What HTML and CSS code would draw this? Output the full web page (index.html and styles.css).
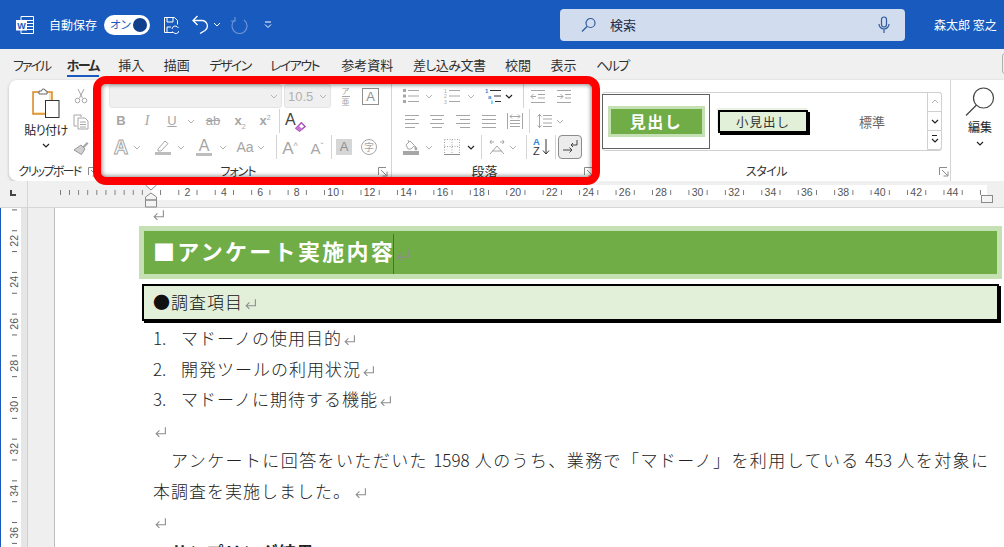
FILE: index.html
```html
<!DOCTYPE html>
<html lang="ja">
<head>
<meta charset="utf-8">
<title>Word</title>
<link rel="stylesheet" href="styles.css">
</head>
<body>
<svg class="defs" aria-hidden="true">
  <symbol id="bullets" viewBox="0 0 16 16"><g fill="#a6a6a6"><rect x="0" y="1" width="3" height="3"/><rect x="0" y="6.5" width="3" height="3"/><rect x="0" y="12" width="3" height="3"/></g><path d="M5 2.5h11M5 8h11M5 13.5h11" stroke="#a6a6a6" fill="none"/></symbol>
  <symbol id="outdent" viewBox="0 0 16 16"><path d="M1 2.5h14M8 6.5h7M8 10h7M1 14.5h14M6 8.5H1M3.5 6L1 8.500l2.500 2.500" stroke="#a6a6a6" fill="none"/></symbol>
  <symbol id="indent" viewBox="0 0 16 16"><path d="M1 2.5h14M9 6.500h6M9 10h6M1 14.500h14M1 8.500h6M4.500 6L7 8.500 4.500 11" stroke="#a6a6a6" fill="none"/></symbol>
  <symbol id="al" viewBox="0 0 16 16"><path d="M1 2.500h14M1 6.500h10M1 10.500h14M1 14.500h10" stroke="#a6a6a6" fill="none"/></symbol>
  <symbol id="ac" viewBox="0 0 16 16"><path d="M1 2.500h14M3 6.500h10M1 10.500h14M3 14.500h10" stroke="#a6a6a6" fill="none"/></symbol>
  <symbol id="ar" viewBox="0 0 16 16"><path d="M1 2.500h14M5 6.500h10M1 10.500h14M5 14.500h10" stroke="#a6a6a6" fill="none"/></symbol>
  <symbol id="aj" viewBox="0 0 16 16"><path d="M1 2.500h14M1 6.500h14M1 10.500h14M1 14.500h14" stroke="#a6a6a6" fill="none"/></symbol>
  <symbol id="dist" viewBox="0 0 16 16"><path d="M.5 0v16M15.500 0v16M3 3.500h10M5 1.500L3 3.500l2 2M11 1.500l2 2-2 2M3 7.500h10M3 10.500h10M3 13.500h10" stroke="#a6a6a6" fill="none"/></symbol>
  <symbol id="spacing" viewBox="0 0 16 16"><path d="M3.500 1v14M1.500 3.500l2-2 2 2M1.500 12.500l2 2 2-2M7 2.500h9M7 6h9M7 10h9M7 13.500h9" stroke="#a6a6a6" fill="none"/></symbol>
  <symbol id="shade" viewBox="0 0 16 16"><path d="M3 6l4-4 4.500 4.500-3.500 3.500H5z" fill="#fff" stroke="#a6a6a6"/><path d="M6 3l-1-2M12 7c1 1.500 2 2 2 3a1 1 0 0 1-2 0z" stroke="#a6a6a6" fill="#a6a6a6"/><rect x="0" y="12" width="16" height="4" fill="#a6a6a6"/></symbol>
  <symbol id="borders" viewBox="0 0 16 16"><path d="M.5.500h15v14M.5.500v14M8 .500v14M.5 7.500h15" stroke="#a6a6a6" stroke-dasharray="1 1.500" fill="none"/><path d="M0 15.500h16" stroke="#909090"/></symbol>
  <symbol id="aspace" viewBox="0 0 16 16"><path d="M1 15L8 7l7 8M3 12h10" stroke="#a6a6a6" fill="none"/><path d="M1 3h4M2.500 1L1 3l1.500 2M11 3h4M13.500 1L15 3l-1.500 2" stroke="#a6a6a6" fill="none"/></symbol>
  <symbol id="parabtn" viewBox="0 0 16 16"><path d="M15 1v5H9M11 4L9 6l2 2" stroke="#444" fill="none"/><path d="M1 11h9M7.500 8.500L10 11l-2.500 2.500" stroke="#444" fill="none"/></symbol>
  <symbol id="launch" viewBox="0 0 10 10"><path d="M.5 8V.500H8M3 3l5.500 5.500M9 4.500V9H4.500" stroke="#8a8a8a" fill="none"/></symbol>
  <symbol id="ch" viewBox="0 0 12 12"><path d="M3 5l3 3 3-3" stroke="#b5b5b5" fill="none"/></symbol>
  <symbol id="chd" viewBox="0 0 12 12"><path d="M3 5l3 3 3-3" stroke="#222" fill="none" stroke-width="1.200"/></symbol>
  <symbol id="ret" viewBox="0 0 12 12"><path d="M10.500 2v6H2M5 5L2 8l3 3" stroke="#8c8c8c" fill="none"/></symbol>
</svg>

<header class="titlebar">
  <svg class="wordicon" viewBox="0 0 18 18"><path d="M5 .5h12.500v17H5z" fill="none" stroke="#fff"/><path d="M11 4.500h6.500M11 7.500h6.500M11 10.500h6.500M11 13.500h6.500" stroke="#fff"/><rect x="0" y="4" width="11" height="10.500" fill="#fff"/><text x="1.200" y="12.500" class="wordw">W</text></svg>
  <span class="autosave">自動保存</span>
  <span class="toggle"><span class="toggle-text">オン</span><span class="knob"></span></span>
  <svg class="tb-save" viewBox="0 0 16 18"><path d="M10 16.500H1.500V1.500h10l3 3v4" fill="none" stroke="#fff"/><path d="M4 2v4h6V2M4 16v-5h4" fill="none" stroke="#fff"/><path d="M9 13a3.200 3.200 0 0 1 5.500-2l1 1M16 15a3.200 3.200 0 0 1-5.500 1.500l-1-1" fill="none" stroke="#fff"/></svg>
  <svg class="tb-undo" viewBox="0 0 17 19"><path d="M5.500 1L1 5.500 5.500 10M1 5.500h9a5.500 5.500 0 0 1 3 10L8 18.500" fill="none" stroke="#fff" stroke-width="1.300"/></svg>
  <svg class="tb-ch" viewBox="0 0 8 8"><path d="M1 2l3 3 3-3" fill="none" stroke="#fff"/></svg>
  <svg class="tb-redo" viewBox="0 0 18 18"><path d="M4 4a7.500 7.500 0 1 0 9 0M4 1v4H0" fill="none" stroke="#6c94d6" stroke-width="1.200"/></svg>
  <svg class="tb-custom" viewBox="0 0 8 8"><path d="M1 1h6M1 3.500l3 3 3-3" fill="none" stroke="#fff"/></svg>
  <div class="search">
    <svg class="s-icon" viewBox="0 0 16 16"><circle cx="9.500" cy="6" r="4.500" fill="none" stroke="#2f5a9e" stroke-width="1.200"/><path d="M6 9.500L1 14.500" stroke="#2f5a9e" stroke-width="1.200"/></svg>
    <span class="s-text">検索</span>
    <svg class="s-mic" viewBox="0 0 12 18"><rect x="3.500" y="1" width="5" height="10" rx="2.500" fill="none" stroke="#2f5a9e" stroke-width="1.200"/><path d="M1 8a5 5 0 0 0 10 0M6 13v4" fill="none" stroke="#2f5a9e" stroke-width="1.200"/></svg>
  </div>
  <span class="user">森太郎 窓之</span>
</header>

<nav class="tabs">
  <span class="tab kana tab-file">ファイル</span>
  <span class="tab kana tab-on">ホーム</span>
  <span class="tab">挿入</span>
  <span class="tab">描画</span>
  <span class="tab kana">デザイン</span>
  <span class="tab kana tab-lay">レイアウト</span>
  <span class="tab">参考資料</span>
  <span class="tab tab-sashi">差し込み文書</span>
  <span class="tab">校閲</span>
  <span class="tab">表示</span>
  <span class="tab kana">ヘルプ</span>
  <span class="tab-box"></span>
</nav>

<section class="ribbon">
  <div class="grp g-clip">
    <div class="clip-body">
      <div class="paste">
        <svg class="paste-ic" viewBox="0 0 28 30"><path d="M1 4h19v22H1z" fill="#fbe3b4" stroke="#d98a22" stroke-width="1.500"/><path d="M2 5h15v19H2z" fill="#fff"/><path d="M7 5V3h2.500a2 2 0 0 1 4 0H15v3H7z" fill="#fff" stroke="#666"/><rect x="13.500" y="12.500" width="13.500" height="17" fill="#fff" stroke="#333"/></svg>
        <span class="paste-t">貼り付け</span>
        <svg class="ch"><use href="#chd"/></svg>
      </div>
      <div class="clip-tools">
        <svg class="i" viewBox="0 0 16 16"><path d="M5 1l4.500 9M11 1L6.500 10" stroke="#a6a6a6" fill="none"/><circle cx="4.500" cy="12.500" r="2.300" fill="none" stroke="#a6a6a6"/><circle cx="11.500" cy="12.500" r="2.300" fill="none" stroke="#a6a6a6"/></svg>
        <svg class="i" viewBox="0 0 16 16"><path d="M1 1h7v2M1 1v11h3" fill="none" stroke="#a6a6a6"/><path d="M5 4h7l3 3v8H5z" fill="#fff" stroke="#a6a6a6"/><path d="M7 8h6M7 10.500h6M7 13h6" stroke="#a6a6a6"/></svg>
        <svg class="i" viewBox="0 0 16 16"><path d="M9 7l5-5 1.500 1.500-5 5z" fill="#a6a6a6"/><path d="M8 5l4 4-3.500 5.500L1 10z" fill="#d0d0d0" stroke="#999"/></svg>
      </div>
    </div>
    <div class="glabel">クリップボード</div>
    <svg class="launch"><use href="#launch"/></svg>
  </div>

  <div class="grp g-font">
    <div class="row">
      <span class="combo c-name"><svg class="ch"><use href="#ch"/></svg></span>
      <span class="combo c-size m2"><span>10.5</span><svg class="ch"><use href="#ch"/></svg></span>
      <span class="phon m9"><span class="phon-a">ア</span><span class="phon-b">亜</span></span>
      <span class="boxA m11">A</span>
    </div>
    <div class="row">
      <span class="t w24 bold">B</span>
      <span class="t w24 m2 ital">I</span>
      <span class="t w24 m1 und">U</span>
      <svg class="ch m1"><use href="#ch"/></svg>
      <span class="t w28 m2 strike">ab</span>
      <span class="t w22 m2 bold">x<sub>2</sub></span>
      <span class="t w22 m3 bold">x<sup>2</sup></span>
      <span class="sep m3"></span>
      <span class="eraser m2"><span class="era-a">A</span><svg class="era-i" viewBox="0 0 12 12"><path d="M1 8l6-6 4 4-6 5z" fill="#fff" stroke="#a94fb8" stroke-width="1.500"/><path d="M1 8l3-3 4 4-3 2z" fill="#c774d4"/></svg></span>
    </div>
    <div class="row">
      <span class="t w20 m2 big outl">A</span>
      <svg class="ch"><use href="#ch"/></svg>
      <svg class="i m12" viewBox="0 0 16 16"><path d="M3 10L10 2l3 2.500-7 7.500H3z" fill="#fff" stroke="#a6a6a6"/><rect x="0" y="13" width="16" height="3" fill="#bdbdbd"/></svg>
      <svg class="ch m4"><use href="#ch"/></svg>
      <span class="colorA m9"><span class="t-a">A</span></span>
      <svg class="ch m5"><use href="#ch"/></svg>
      <span class="t w20 m6 aa">Aa</span>
      <svg class="ch"><use href="#ch"/></svg>
      <span class="sep m9"></span>
      <span class="t w18 m4 bigt">A<small>^</small></span>
      <span class="t w18 m9 midt">A<small>ˇ</small></span>
      <span class="sep m5"></span>
      <span class="shadeA m4">A</span>
      <span class="ji m9">字</span>
    </div>
    <div class="glabel">フォント</div>
    <svg class="launch"><use href="#launch"/></svg>
  </div>

  <div class="grp g-para">
    <div class="row">
      <svg class="i m3"><use href="#bullets"/></svg>
      <svg class="ch m4"><use href="#ch"/></svg>
      <svg class="i m9" viewBox="0 0 16 16"><g fill="#a6a6a6" font-size="5" font-family="Liberation Sans"><text x="0" y="5">1</text><text x="0" y="10">2</text><text x="0" y="15.5">3</text></g><path d="M5 2.5h11M5 8h11M5 13.500h11" stroke="#a6a6a6" fill="none"/></svg>
      <svg class="ch m5"><use href="#ch"/></svg>
      <svg class="i m8" viewBox="0 0 16 16"><g fill="#2b88d8" font-size="6" font-weight="700" font-family="Liberation Sans"><text x="0" y="5">1</text><text x="3" y="10.500">a</text><text x="6" y="15.800">i</text></g><path d="M5 2.500h11M9 8h7M10 13.500h6" stroke="#333" fill="none"/></svg>
      <svg class="ch m2"><use href="#chd"/></svg>
      <span class="sep m8"></span>
      <svg class="i m6"><use href="#outdent"/></svg>
      <svg class="i m10"><use href="#indent"/></svg>
    </div>
    <div class="row">
      <svg class="i m4"><use href="#al"/></svg>
      <svg class="i m9"><use href="#ac"/></svg>
      <svg class="i m10"><use href="#ar"/></svg>
      <svg class="i m10"><use href="#aj"/></svg>
      <svg class="i m10"><use href="#dist"/></svg>
      <span class="sep m6"></span>
      <svg class="i m6"><use href="#spacing"/></svg>
      <svg class="ch m2"><use href="#ch"/></svg>
    </div>
    <div class="row">
      <svg class="i m3"><use href="#shade"/></svg>
      <svg class="ch m4"><use href="#ch"/></svg>
      <svg class="i m9"><use href="#borders"/></svg>
      <svg class="ch m5"><use href="#chd"/></svg>
      <span class="sep m4"></span>
      <svg class="i m7"><use href="#aspace"/></svg>
      <svg class="ch m2"><use href="#ch"/></svg>
      <span class="sep m7"></span>
      <span class="sort m6"><span class="sort-a">A</span><span class="sort-z">Z</span><svg class="sort-arr" viewBox="0 0 8 16"><path d="M4 0v15M1 11.500L4 15l3-3.500" fill="none" stroke="#333"/></svg></span>
      <span class="sep m4"></span>
      <span class="parabtn m2"><svg class="i"><use href="#parabtn"/></svg></span>
    </div>
    <div class="glabel">段落</div>
    <svg class="launch"><use href="#launch"/></svg>
  </div>

  <div class="grp g-style">
    <div class="gallery">
      <div class="st st-h1"><span class="st-h1-in">見出し</span></div>
      <div class="st st-h2"><span class="st-h2-in">小見出し</span></div>
      <div class="st st-n">標準</div>
      <div class="st-scroll">
        <span class="st-b"><svg class="ch flip"><use href="#ch"/></svg></span>
        <span class="st-b"><svg class="ch"><use href="#chd"/></svg></span>
        <span class="st-b st-more"><svg class="ch"><use href="#chd"/></svg></span>
      </div>
    </div>
    <div class="glabel">スタイル</div>
    <svg class="launch launch-dark"><use href="#launch"/></svg>
  </div>

  <div class="grp g-edit">
    <svg class="edit-ic" viewBox="0 0 30 30"><circle cx="18.500" cy="11" r="10" fill="none" stroke="#444" stroke-width="1.200"/><path d="M11.500 18L1 28.500" stroke="#444" stroke-width="1.200"/></svg>
    <span class="edit-t">編集</span>
    <svg class="ch"><use href="#chd"/></svg>
  </div>
</section>

<div class="hruler">
  <div class="corner"><span class="tabmark"></span></div>
  <div class="r-left"></div>
  <div class="r-right">
    <span>2</span><span>4</span><span>6</span><span>8</span><span>10</span><span>12</span><span>14</span><span>16</span><span>18</span><span>20</span><span>22</span><span>24</span><span>26</span><span>28</span><span>30</span><span>32</span><span>34</span><span>36</span><span>38</span><span>40</span><span>42</span><span>44</span>
    <i class="home"></i>
  </div>
  <svg class="indent-mark" viewBox="0 0 12 27"><path d="M.5.500h11V4L6 9 .5 4z" fill="#fff" stroke="#8a8a8a"/><path d="M.5 19V16L6 12l5.500 4v3zM.5 19h11v7H.5z" fill="#f4f4f4" stroke="#8a8a8a"/></svg>
</div>

<main class="workspace">
  <aside class="vruler">
    <div class="v-track">
      <span>22</span><span>24</span><span>26</span><span>28</span><span>30</span><span>32</span><span>34</span><span>36</span>
    </div>
  </aside>
  <div class="gutter"></div>
  <article class="page">
    <div class="mark-line"><svg class="ret"><use href="#ret"/></svg></div>
    <h1 class="h1">■アンケート実施内容<span class="caret"></span><svg class="ret ret-h"><use href="#ret"/></svg></h1>
    <h2 class="h2">●調査項目<svg class="ret"><use href="#ret"/></svg></h2>
    <p class="ln"><span class="num">1.</span>マドーノの使用目的<svg class="ret"><use href="#ret"/></svg></p>
    <p class="ln"><span class="num">2.</span>開発ツールの利用状況<svg class="ret"><use href="#ret"/></svg></p>
    <p class="ln"><span class="num">3.</span>マドーノに期待する機能<svg class="ret"><use href="#ret"/></svg></p>
    <p class="ln"><svg class="ret"><use href="#ret"/></svg></p>
    <p class="ln ln-just">アンケートに回答をいただいた 1598 人のうち、業務で「マドーノ」を利用している 453 人を対象に</p>
    <p class="ln">本調査を実施しました。<svg class="ret ret-sp"><use href="#ret"/></svg></p>
    <p class="ln"><svg class="ret"><use href="#ret"/></svg></p>
    <p class="ln ln-b">サンプリング結果</p>
  </article>
</main>

<div class="redbox"></div>
</body>
</html>
```

FILE: styles.css
```css
* { box-sizing: border-box; }
html, body { margin: 0; padding: 0; }
body {
  width: 1004px; height: 547px; overflow: hidden; position: relative;
  background: #f0f0f0;
  font-family: "Noto Sans CJK JP", "Noto Sans", sans-serif;
  font-size: 12px; color: #262626;
}
.defs { position: absolute; width: 0; height: 0; }
svg { display: block; flex: none; }

/* title bar */
.titlebar { height: 49px; background: #185abd; color: #fff; display: flex; align-items: center; padding-left: 16px; }
.wordicon { width: 18px; height: 18px; }
.wordw { font: 700 9px "Liberation Sans", sans-serif; fill: #185abd; }
.autosave { margin-left: 15px; font-size: 12px; width: 48px; }
.toggle { margin-left: 7px; width: 46px; height: 20px; border-radius: 10px; background: #fff; display: flex; align-items: center; justify-content: space-between; padding: 0 3px 0 6px; }
.toggle-text { color: #185abd; font-size: 11.500px; line-height: 1; font-feature-settings: "palt"; }
.knob { width: 14px; height: 14px; border-radius: 50%; background: #12408c; }
.tb-save { width: 16px; height: 18px; margin-left: 13px; }
.tb-undo { width: 17px; height: 19px; margin-left: 13px; }
.tb-ch { width: 8px; height: 8px; margin-left: 4px; }
.tb-redo { width: 18px; height: 18px; margin-left: 10px; }
.tb-custom { width: 8px; height: 8px; margin-left: 15px; }
.search { margin-left: 288px; width: 345px; height: 32px; border-radius: 4px; background: #d1dcee; display: flex; align-items: center; padding-left: 21px; }
.s-icon { width: 16px; height: 16px; }
.s-text { margin-left: 13px; font-size: 13px; color: #1f2b45; }
.s-mic { width: 12px; height: 18px; margin-left: 242px; }
.user { margin-left: 29px; font-size: 12px; white-space: nowrap; }

/* tabs */
.tabs { height: 31px; display: flex; align-items: center; padding-left: 13px; gap: 19.500px; font-size: 13px; color: #303030; position: relative; font-feature-settings: "palt"; }
.tab { line-height: 18px; white-space: nowrap; }
.kana { letter-spacing: -1.600px; }
.tab-file { margin-right: -3px; letter-spacing: -2px; }
.tab-lay { margin-right: 3px; }
.tab-sashi { letter-spacing: -.5px; }
.tab-on { font-weight: 700; position: relative; }
.tab-on::after { content: ""; position: absolute; left: 0; right: 0; bottom: -3px; height: 2px; background: #185abd; }
.tab-box { position: absolute; left: 1002px; top: 4px; width: 10px; height: 21px; border: 1px solid #b0b0b0; border-radius: 3px; }

/* ribbon */
.ribbon { margin-left: 9px; height: 101px; background: #fff; border-radius: 8px 0 0 8px; box-shadow: 0 1px 3px rgba(0,0,0,.25); display: flex; position: relative; }
.grp { position: relative; height: 101px; padding-top: 4px; flex: none; }
.glabel { position: absolute; left: 0; right: 0; bottom: 2px; text-align: center; font-size: 12px; line-height: 16px; color: #333; font-feature-settings: "palt"; }
.launch { position: absolute; right: 3px; bottom: 4px; width: 10px; height: 10px; }
.launch-dark { right: 1px; }
.row { height: 26px; display: flex; align-items: center; padding-left: 8px; }
.row:first-child { height: 24px; }
.i { width: 16px; height: 16px; }
.ch { width: 12px; height: 12px; }
.flip { transform: rotate(180deg); }
.sep { width: 1px; height: 24px; background: #d4d4d4; flex: none; }
.m1 { margin-left: 1px; } .m2 { margin-left: 2px; } .m3 { margin-left: 3px; } .m4 { margin-left: 4px; }
.m5 { margin-left: 5px; } .m6 { margin-left: 6px; } .m7 { margin-left: 7px; } .m8 { margin-left: 8px; }
.m9 { margin-left: 9px; } .m10 { margin-left: 10px; } .m11 { margin-left: 11px; } .m12 { margin-left: 12px; }

.g-clip { width: 92px; border-right: 1px solid #d4d4d4; }
.clip-body { display: flex; }
.paste { width: 50px; margin-left: 12px; padding-top: 4px; display: flex; flex-direction: column; align-items: center; }
.paste-ic { width: 28px; height: 30px; }
.paste-t { margin-top: 4px; font-size: 12px; line-height: 16px; letter-spacing: -.5px; white-space: nowrap; font-feature-settings: "palt"; }
.paste .ch { margin-top: 1px; }
.clip-tools { margin-left: 2px; display: flex; flex-direction: column; gap: 10px; padding-top: 4px; }
.g-clip .glabel { right: 10px; white-space: nowrap; letter-spacing: -1.700px; }
.g-clip .launch { right: 2px; }

.g-font { width: 291px; border-right: 1px solid #d4d4d4; }
.g-font .glabel { right: 16px; letter-spacing: -1px; }
.combo { height: 24px; background: #f0f0f0; border: 1px solid #e4e4e4; border-radius: 3px; display: flex; align-items: center; justify-content: flex-end; padding-right: 1px; flex: none; }
.c-name { width: 173px; }
.c-size { width: 47px; justify-content: space-between; padding-left: 3px; color: #b0b0b0; font: 13px "Liberation Sans", sans-serif; }
.phon { width: 11px; display: flex; flex-direction: column; align-items: center; color: #a6a6a6; font-size: 8px; line-height: 10px; }
.phon-b { border-top: 1px solid #a6a6a6; }
.boxA { width: 17px; height: 17px; border: 1px solid #909090; color: #909090; font: 13px/15px "Liberation Sans", sans-serif; text-align: center; }
.t { display: block; text-align: center; color: #a6a6a6; font-family: "Liberation Sans", sans-serif; font-size: 13px; line-height: 18px; flex: none; }
.t sub, .t sup { font-size: 7px; line-height: 0; font-weight: 400; }
.w18 { width: 18px; } .w20 { width: 20px; } .w22 { width: 22px; } .w24 { width: 24px; } .w28 { width: 28px; }
.bold { font-weight: 700; }
.ital { font-style: italic; font-family: "Liberation Serif", serif; font-size: 14px; }
.und { text-decoration: underline; }
.strike { text-decoration: line-through; font-size: 13px; }
.big { font-size: 20px; font-weight: 700; color: #fff; -webkit-text-stroke: 1px #a6a6a6; }
.aa { font-size: 14px; }
.bigt { font-size: 17px; white-space: nowrap; }
.midt { font-size: 15px; white-space: nowrap; }
.t small { font-size: 9px; vertical-align: 5px; }
.eraser { width: 24px; height: 22px; position: relative; display: block; flex: none; }
.era-a { font: 16px/20px "Liberation Sans", sans-serif; color: #444; position: absolute; left: 3px; top: 0; }
.era-i { width: 11px; height: 11px; position: absolute; right: 0; bottom: 0; }
.colorA { width: 16px; height: 18px; border-bottom: 3px solid #bdbdbd; display: block; text-align: center; color: #a6a6a6; font: 16px/15px "Liberation Sans", sans-serif; flex: none; }
.shadeA { width: 16px; height: 16px; background: #d6d6d6; color: #8f8f8f; text-align: center; font: 13px/16px "Liberation Sans", sans-serif; flex: none; }
.ji { width: 16px; height: 16px; border: 1px solid #a6a6a6; border-radius: 50%; color: #a6a6a6; font-size: 10px; line-height: 14px; text-align: center; flex: none; }

.g-para { width: 205px; }
.g-para .glabel { right: 20px; font-size: 13px; }
.sort { width: 18px; height: 20px; position: relative; display: block; flex: none; }
.sort-a, .sort-z { position: absolute; left: 0; font: 700 9.500px/9px "Liberation Sans", sans-serif; }
.sort-a { top: 0; color: #2b88d8; }
.sort-z { top: 10px; color: #333; font-weight: 400; font-size: 11px; }
.sort-arr { position: absolute; right: 1px; top: 2px; width: 8px; height: 16px; }
.parabtn { width: 24px; height: 24px; background: #ececec; border: 1px solid #8c8c8c; border-radius: 4px; display: flex; align-items: center; justify-content: center; flex: none; }

.g-style { width: 354px; border-right: 1px solid #d4d4d4; padding: 12px 0 0 5px; }
.gallery { width: 340px; height: 59px; border: 1px solid #d0d0d0; border-radius: 3px; display: flex; align-items: center; position: relative; }
.st { flex: none; }
.st-h1 { width: 108px; height: 55px; border: 1px solid #606060; margin-left: -1px; display: flex; align-items: center; justify-content: center; }
.st-h1-in { width: 97px; height: 31px; border: 3px solid #c5e0b3; background: #70ad47; color: #fff; font-weight: 700; font-size: 16px; line-height: 25px; text-align: center; letter-spacing: 1.500px; }
.st-h2 { margin-left: 8px; margin-right: 2px; width: 90px; height: 23px; border: 2px solid #000; box-shadow: 2px 2px 0 #000, -1px -2px 0 #eaf3e3; background: #e2efd9; font-size: 12.500px; line-height: 19px; text-align: center; letter-spacing: 1px; color: #333; }
.st-n { width: 118px; text-align: center; font-size: 13px; color: #666; padding-left: 6px; }
.st-scroll { position: absolute; right: -1px; top: -1px; width: 15px; height: 59px; display: flex; flex-direction: column; }
.st-b { height: 20px; border: 1px solid #d0d0d0; display: flex; align-items: center; justify-content: center; margin-top: -1px; background: #fff; }
.st-b:first-child { margin-top: 0; border-radius: 0 3px 0 0; }
.st-more { position: relative; border-radius: 0 0 3px 0; }
.st-more::before { content: ""; position: absolute; left: 4px; right: 4px; top: 4px; height: 1px; background: #222; }
.g-style .glabel { right: 14px; letter-spacing: -.5px; }

.g-edit { width: 56px; padding-left: 2px; display: flex; flex-direction: column; align-items: center; padding-top: 7px; }
.edit-ic { width: 30px; height: 30px; }
.edit-t { margin-top: 1px; font-size: 12px; line-height: 18px; }
.g-edit .ch { margin-top: 1px; }

/* horizontal ruler */
.hruler { height: 27px; display: flex; position: relative; border-bottom: 1px solid #d6d6d6; background: #f0f0f0; }
.corner { width: 28px; border-right: 1px solid #d6d6d6; padding: 9px 0 0 10px; }
.tabmark { display: block; width: 6px; height: 6px; border-left: 2px solid #444; border-bottom: 2px solid #444; }
.r-left { width: 91px; margin-left: 32px; height: 15px; margin-top: 4px; background: linear-gradient(to right, #777 1px, transparent 1px) 0 center / 9.100px 5px repeat-x; }
.r-right { width: 836px; height: 15px; margin-top: 4px; background: linear-gradient(to right, #777 1px, transparent 1px) 9.100px center / 18.225px 5px repeat-x, #fff; display: flex; padding-left: 18.200px; position: relative; }
.r-right span { width: 36.450px; flex: none; text-align: center; font: 10.500px/15px "Liberation Sans", sans-serif; color: #555; }
.r-right span { background: linear-gradient(#fff, #fff) center / 14px 100% no-repeat; }
.home { position: absolute; right: -6px; bottom: -3px; width: 12px; height: 8px; border: 1px solid #8a8a8a; background: #f4f4f4; }
.indent-mark { position: absolute; left: 145px; top: 0; width: 12px; height: 27px; }

/* workspace */
.workspace { height: 339px; display: flex; overflow: hidden; }
.vruler { width: 28px; flex: none; border-left: 1px solid #185abd; border-right: 1px solid #d0d0d0; background: linear-gradient(to right, #fff 20px, #e6e6e6 20px); position: relative; }
.v-track { height: 339px; padding-top: 11.700px; background: linear-gradient(#666 1px, transparent 1px) 11px 1.400px / 5px 20.850px repeat-y; }
.v-track span { display: flex; align-items: center; justify-content: center; height: 41.700px; width: 26px; position: relative; }
.v-track span { font: 10.500px "Liberation Sans", sans-serif; color: #555; writing-mode: vertical-rl; transform: rotate(180deg); background: linear-gradient(#fff, #fff) center / 14px 14px no-repeat; }
.gutter { width: 27px; flex: none; background: #efefef; border-right: 1px solid #bdbdbd; }
.page { flex: 1; background: #fff; min-width: 0; font-family: "Noto Sans CJK JP", sans-serif; font-weight: 300; font-size: 17px; color: #222; }
.mark-line { height: 18px; padding: 0 0 0 97px; }
.mark-line .ret { display: block; margin: 0; }
.ret { width: 13px; height: 13px; display: inline-block; vertical-align: -1px; margin-left: 1px; }
.ret-sp { margin-left: 3px; }
.ret-h { width: 15px; height: 15px; vertical-align: -2px; }
.h1 { margin: 0 2px 0 84px; height: 53px; border: 5px solid #c5e0b3; background: #70ad47; color: #fff; font-size: 22px; font-weight: 700; letter-spacing: 2.300px; line-height: 38px; padding-left: 9px; white-space: nowrap; }
.caret { display: inline-block; width: 1px; height: 40px; background: #5a5a7a; vertical-align: middle; margin-left: -2px; }
.h2 { margin: 5px 5px 2px 87px; height: 37px; border: 2px solid #000; box-shadow: 2px 2px 0 #000; background: #e2efd9; font-size: 17px; font-weight: 300; line-height: 32px; letter-spacing: 1px; padding-left: 9px; color: #111; }
.ln { margin: 0 0 0 98px; height: 30.500px; line-height: 30.500px; letter-spacing: 1px; white-space: nowrap; }
.num { display: inline-block; width: 28px; letter-spacing: 0; }
.ln-just { white-space: normal; width: 835px; text-align: justify; text-align-last: justify; text-indent: 18px; letter-spacing: 0; overflow: hidden; }
.ln-b { font-weight: 700; padding-left: 18px; }

/* red highlight */
.redbox { position: absolute; left: 93px; top: 76px; width: 507px; height: 109px; border: 8px solid #f00; border-radius: 13px; box-shadow: inset 0 0 4px 1px rgba(0,0,0,.45); pointer-events: none; }
```
